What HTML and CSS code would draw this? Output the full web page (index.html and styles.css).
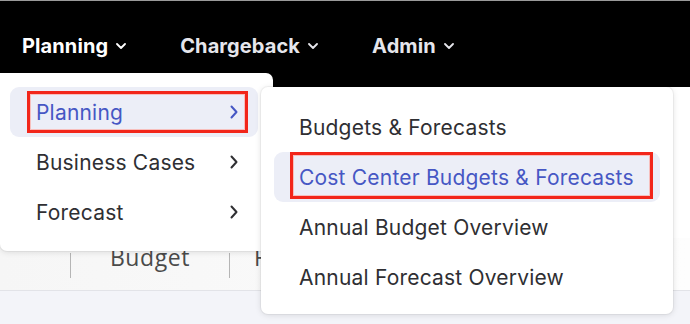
FILE: index.html
```html
<!DOCTYPE html>
<html lang="en">
<head>
    <meta charset="UTF-8">
    <meta name="viewport" content="width=device-width, initial-scale=1.0">
    <title>Planning menu</title>
    <link rel="stylesheet" href="styles.css">
</head>
<body>
    <header class="topbar">
        <nav class="main-nav">
            <div class="nav-item active">Planning
                <svg class="caret" viewBox="0 0 10 6" width="10" height="6"><path d="M1 1l4 4 4-4" /></svg>
            </div>
            <div class="nav-item">Chargeback
                <svg class="caret" viewBox="0 0 10 6" width="10" height="6"><path d="M1 1l4 4 4-4" /></svg>
            </div>
            <div class="nav-item">Admin
                <svg class="caret" viewBox="0 0 10 6" width="10" height="6"><path d="M1 1l4 4 4-4" /></svg>
            </div>
        </nav>
    </header>

    <section class="page">
        <div class="tabs">
            <div class="tab-spacer"></div>
            <div class="tab">Budget</div>
            <div class="tab tab-clipped">F</div>
        </div>
    </section>

    <!-- first level menu -->
    <div class="menu menu-main">
        <div class="menu-item selected">
            <span>Planning</span>
            <svg class="arrow" viewBox="0 0 8 14" width="8" height="14"><path d="M1.5 1.5l5 5.5-5 5.5" /></svg>
            <div class="mark"></div>
        </div>
        <div class="menu-item">
            <span>Business Cases</span>
            <svg class="arrow" viewBox="0 0 8 14" width="8" height="14"><path d="M1.5 1.5l5 5.5-5 5.5" /></svg>
        </div>
        <div class="menu-item">
            <span>Forecast</span>
            <svg class="arrow" viewBox="0 0 8 14" width="8" height="14"><path d="M1.5 1.5l5 5.5-5 5.5" /></svg>
        </div>
    </div>

    <!-- submenu -->
    <div class="menu menu-sub">
        <div class="menu-item">Budgets &amp; Forecasts</div>
        <div class="menu-item selected">Cost Center Budgets &amp; Forecasts
            <div class="mark"></div>
        </div>
        <div class="menu-item">Annual Budget Overview</div>
        <div class="menu-item">Annual Forecast Overview</div>
    </div>
</body>
</html>
```

FILE: styles.css
```css
:root {
    --accent: #4657c4;
    --hover-bg: #eceef7;
    --text: #2f2f33;
    --mark: #f2261a;
}

body {
    margin: 0;
    font-family: Inter, "Noto Sans", sans-serif;
    background: #f3f4f9;
    color: var(--text);
    height: 324px;
    overflow: hidden;
}

.topbar {
    height: 86px;
    background: #000;
    border-top: 1px solid #9a9a9a;
}

.main-nav {
    display: flex;
    padding: 33px 0 0 22px;
}

.nav-item {
    display: flex;
    align-items: center;
    gap: 8px;
    font-size: 20px;
    font-weight: 700;
    letter-spacing: 0.1px;
    color: #e6e6ec;
    margin-right: 54px;
}

.nav-item.active {
    color: #fff;
}

.caret {
    fill: none;
    stroke: currentColor;
    stroke-width: 1.8;
    stroke-linecap: round;
    stroke-linejoin: round;
}

.page {
    height: 203px;
    background: #fff;
    border-bottom: 1px solid #e2e3e8;
    display: flex;
    flex-direction: column;
    justify-content: flex-end;
}

.tabs {
    display: flex;
    align-items: flex-end;
    height: 52px;
    padding-bottom: 12px;
    box-sizing: border-box;
    background: linear-gradient(90deg, #f6f6f6, #fdfdfd);
    font-family: "Open Sans", sans-serif;
    font-size: 23px;
    letter-spacing: 0.6px;
    color: #4a4a4a;
}

.tab-spacer {
    width: 70px;
}

.tab {
    width: 158px;
    height: 25px;
    line-height: 8px;
    border-left: 1px solid #b5b5b5;
    text-align: center;
}

.tab-clipped {
    width: 31px;
    padding-left: 24px;
    box-sizing: border-box;
    text-align: left;
}

.menu {
    position: absolute;
    background: #fff;
    border-radius: 7px;
    box-shadow: 0 1px 6px rgba(0, 0, 0, 0.12), 0 0 0 1px rgba(0, 0, 0, 0.04);
    display: flex;
    flex-direction: column;
}

.menu-main {
    left: 0;
    top: 73px;
    width: 273px;
    padding: 14px 15px 14px 10px;
    box-sizing: border-box;
    border-top-left-radius: 0;
}

.menu-sub {
    left: 261px;
    top: 87px;
    width: 412px;
    padding: 15px 13px 12px 13px;
    box-sizing: border-box;
}

.menu-item {
    position: relative;
    display: flex;
    align-items: center;
    justify-content: space-between;
    height: 50px;
    padding: 0 20px 0 26px;
    border-radius: 9px;
    font-size: 21px;
    letter-spacing: 0.2px;
    color: var(--text);
}

.menu-sub .menu-item {
    padding-left: 25px;
}

.menu-item.selected {
    background: var(--hover-bg);
    color: var(--accent);
}

.arrow {
    fill: none;
    stroke: currentColor;
    stroke-width: 2;
    stroke-linecap: round;
    stroke-linejoin: round;
}

/* red highlight box drawn over the chosen entry */
.mark {
    position: absolute;
    border: 3px solid var(--mark);
    box-shadow: inset 0 0 0 1px rgba(255, 160, 150, 0.6);
}

.menu-main .mark {
    left: 17px;
    right: 10px;
    top: 4px;
    bottom: 4px;
}

.menu-sub .mark {
    left: 16px;
    right: 7px;
    top: 0;
    bottom: 3px;
}
```
